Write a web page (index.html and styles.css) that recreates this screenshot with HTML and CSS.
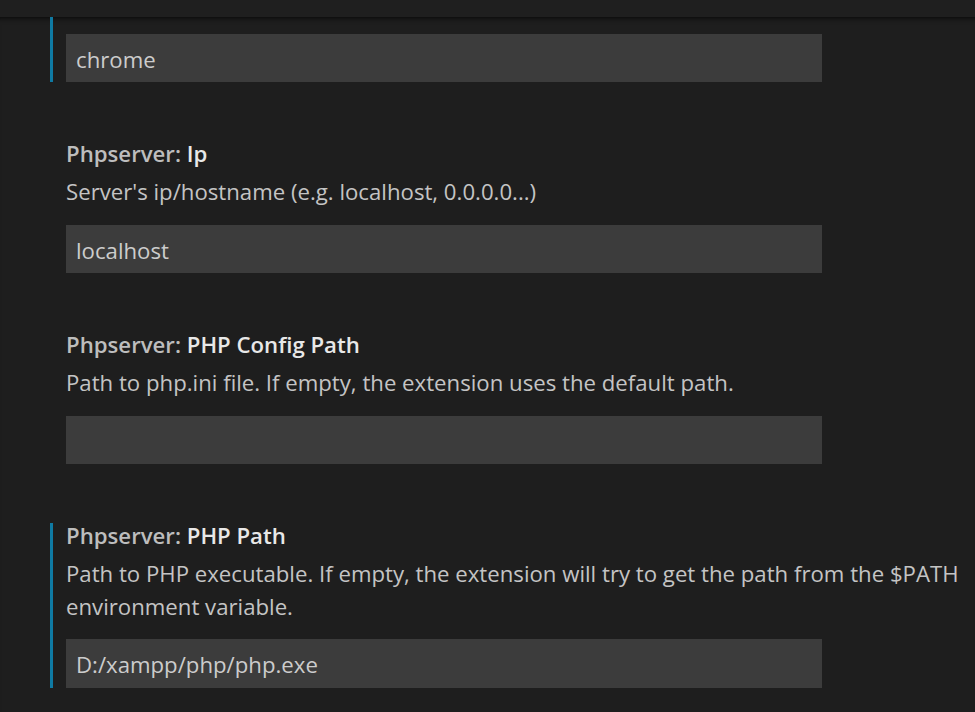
FILE: index.html
```html
<!DOCTYPE html>
<html>
<head>
<meta charset="utf-8">
<link rel="stylesheet" href="styles.css">
</head>
<body>
<div class="header"></div>
<div class="list">
  <div class="item item-first focused">
    <div class="input">chrome</div>
  </div>
  <div class="item">
    <div class="title"><span class="cat">Phpserver: </span><span class="name">Ip</span></div>
    <div class="desc">Server's ip/hostname (e.g. localhost, 0.0.0.0...)</div>
    <div class="input">localhost</div>
  </div>
  <div class="item">
    <div class="title"><span class="cat">Phpserver: </span><span class="name">PHP Config Path</span></div>
    <div class="desc">Path to php.ini file. If empty, the extension uses the default path.</div>
    <div class="input"></div>
  </div>
  <div class="item focused">
    <div class="title"><span class="cat">Phpserver: </span><span class="name">PHP Path</span></div>
    <div class="desc">Path to PHP executable. If empty, the extension will try to get the path from the $PATH<br>environment variable.</div>
    <div class="input">D:/xampp/php/php.exe</div>
  </div>
</div>
</body>
</html>
```
FILE: styles.css
```css
html, body {
  margin: 0;
  padding: 0;
  background: #1e1e1e;
  height: 100%;
  overflow: hidden;
}
body {
  font-family: "Open Sans", "Noto Sans", sans-serif;
  font-size: 22.2px;
  color: #cccccc;
  display: flex;
  flex-direction: column;
}
.header {
  height: 17px;
  flex: none;
  background: #1f1f1f;
}
.list {
  flex: 1;
  overflow: hidden;
  box-shadow: inset 0 6px 6px -6px #000;
  padding-left: 50px;
  display: flex;
  flex-direction: column;
  gap: 59px;
}
.item {
  border-left: 3px solid transparent;
  padding-left: 13px;
  width: 906px;
}
.item.focused {
  border-left-color: #0f7aa3;
}
.item-first {
  padding-top: 17px;
}
.title {
  padding-top: 1px;
  line-height: 24px;
  margin-bottom: 10px;
  font-weight: 600;
  white-space: nowrap;
}
.cat {
  color: #bdbdbd;
}
.name {
  color: #e8e8e8;
}
.desc {
  line-height: 32.5px;
  color: #c4c4c4;
  margin-bottom: 16px;
  white-space: nowrap;
}
.input {
  width: 746px;
  height: 45.4px;
  line-height: 45.4px;
  padding-top: 3px;
  background: #3c3c3c;
  padding-left: 10px;
  color: #cccccc;
}
```
